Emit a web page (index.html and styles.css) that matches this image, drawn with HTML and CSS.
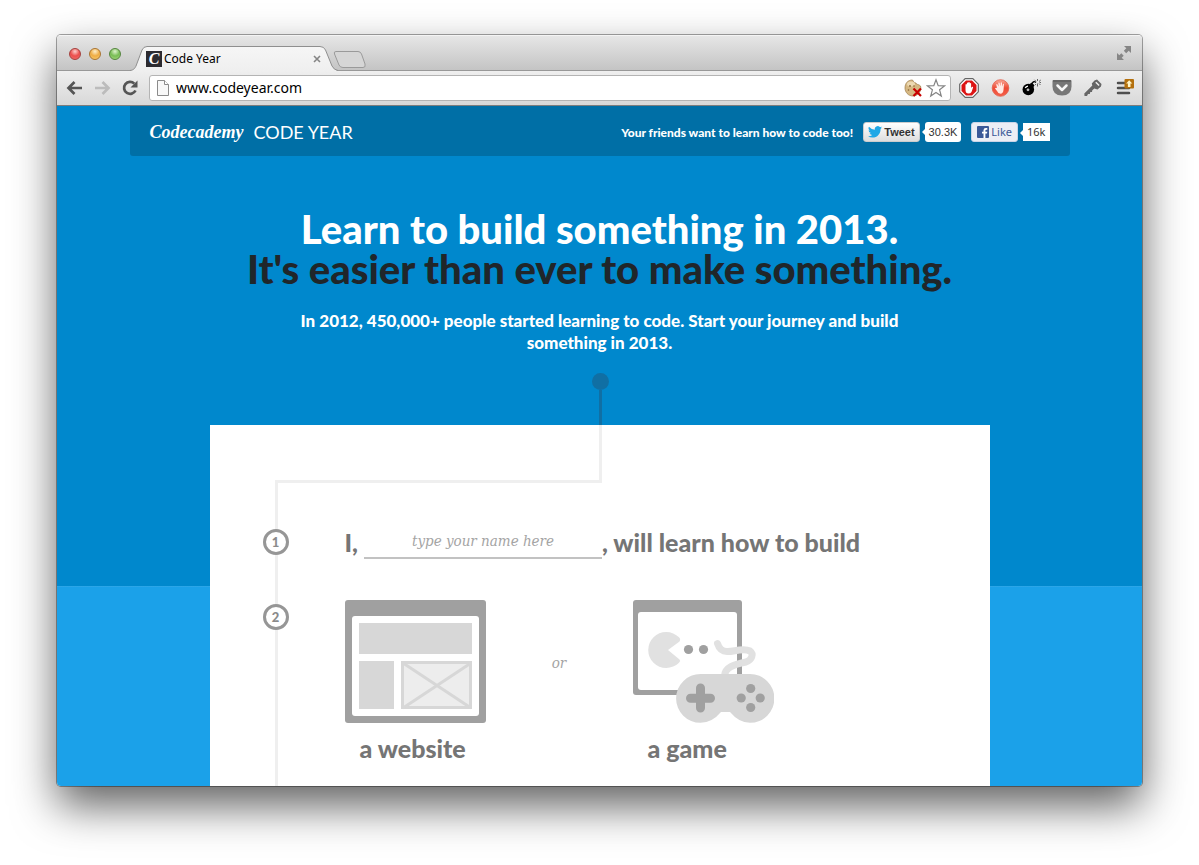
FILE: index.html
```html
<!DOCTYPE html>
<html lang="en">
<head>
<meta charset="utf-8">
<title>Code Year</title>
<link rel="stylesheet" href="styles.css">
</head>
<body>
<div class="window">
  <div class="titlebar">
    <div class="lights">
      <button class="light light-red" aria-label="Close window"></button>
      <button class="light light-amber" aria-label="Minimize window"></button>
      <button class="light light-green" aria-label="Zoom window"></button>
    </div>
    <div class="tab">
      <svg class="tab-shape" viewBox="0 0 208 25" aria-hidden="true">
        <defs><linearGradient id="tabfill" x1="0" y1="0" x2="0" y2="1"><stop offset="0" stop-color="#f6f6f6"/><stop offset="1" stop-color="#efefef"/></linearGradient></defs>
        <path d="M0 25C4 24 5 22 6 20L12 4Q13.500 .5 17 .5H190Q194 .5 195.500 4L202 20Q204 24 208 25Z" fill="url(#tabfill)"/>
        <path d="M0 24.500C4 24 5 22 6 20L12 4Q13.500 .5 17 .5H190Q194 .5 195.500 4L202 20Q204 24 208 24.500" fill="none" stroke="#8f8f8f"/>
      </svg>
      <span class="favicon">C</span>
      <span class="tab-title">Code Year</span>
      <button class="tab-close" aria-label="Close tab"><svg width="8" height="8" viewBox="0 0 8 8"><path d="M1 1l6 6M7 1L1 7" stroke="#858585" stroke-width="1.600"/></svg></button>
    </div>
    <button class="new-tab" aria-label="New tab"><svg width="34" height="17" viewBox="0 0 34 17"><path d="M3 .5H25Q27.500 .5 28.500 3L32 13Q33 16.500 30 16.500H10Q7 16.500 6 14L1.500 3Q.5 .5 3 .5Z" fill="#d6d6d6" stroke="#9a9a9a"/></svg></button>
    <button class="expand" aria-label="Full screen"><svg width="16" height="16" viewBox="0 0 16 16"><path d="M8 1h7v7l-2.300-2.300-2.500 2.500-2.400-2.400 2.500-2.500zM1 8v7h7l-2.300-2.300 2-2-2.400-2.400-2 2z" fill="#868686"/></svg></button>
  </div>

  <div class="toolbar">
    <button class="tool" aria-label="Back"><svg viewBox="0 0 20 20"><path d="M17 10H4M9.500 4L3.500 10l6 6" fill="none" stroke="#555" stroke-width="2.700"/></svg></button>
    <button class="tool" aria-label="Forward"><svg viewBox="0 0 20 20"><path d="M2 10h13M9.500 4l6 6-6 6" fill="none" stroke="#bcbcbc" stroke-width="2.700"/></svg></button>
    <button class="tool" aria-label="Reload"><svg viewBox="0 0 20 20"><path d="M14.500 12.500A6 6 0 1 1 13.300 5.600" fill="none" stroke="#555" stroke-width="2.700"/><path d="M16.500 2.500V9.500H9.500Z" fill="#555"/></svg></button>
    <div class="omnibox">
      <svg class="page-icon" width="12" height="16" viewBox="0 0 12 16"><path d="M.5 .5H7.500L11.500 4.500V15.500H.5Z" fill="#f8f8f8" stroke="#8b8b8b"/><path d="M7.500 .5V4.500H11.500" fill="#fff" stroke="#8b8b8b"/></svg>
      <input class="url" type="text" aria-label="Address" value="www.codeyear.com">
      <svg width="20" height="20" viewBox="0 0 20 20"><path d="M8.500 2C10 4 10 5 12 5 12 7 15 6 16.500 8 18 13 14 18 9 18 4 18 1 14 1 10 1 5 4 2 8.500 2Z" fill="#d6b883" stroke="#9c7b49" stroke-width=".7"/><ellipse cx="7" cy="6" rx="4" ry="2.500" fill="#ecd9b2"/><circle cx="6" cy="8" r=".9" fill="#866334"/><circle cx="4.500" cy="12" r=".8" fill="#866334"/><circle cx="10" cy="8" r=".8" fill="#866334"/><path d="M9.500 10.500l7.500 7.500M17 10.500l-7.500 7.500" stroke="#c80000" stroke-width="2.200"/></svg>
      <svg width="20" height="20" viewBox="0 0 20 20"><path d="M10 1.800L12.200 7.600 18.500 7.900 13.600 11.800 15.300 18 10 14.500 4.700 18 6.400 11.800 1.500 7.900 7.800 7.600Z" fill="#fff" stroke="#858585" stroke-width="1.200"/></svg>
    </div>
    <div class="extensions">
      <button class="tool" aria-label="AdBlock"><svg viewBox="0 0 20 20"><path d="M6.200 .7H13.800L19.300 6.200V13.800L13.800 19.300H6.200L.7 13.800V6.200Z" fill="#fff" stroke="#666" stroke-width="1.200"/><path d="M7 2.500H13L17.500 7V13L13 17.500H7L2.500 13V7Z" fill="#dc1414"/><path d="M6.500 10V6.500Q7.200 5.700 7.900 6.500V5Q8.600 4.200 9.300 5V4.300Q10 3.500 10.700 4.300V5.200Q11.500 4.500 12.100 5.400V10L13 8.700Q14.500 8.500 14 9.800L12.500 14Q11.500 15.500 9.500 15.500 6.500 15.500 6.500 12Z" fill="#fff"/></svg></button>
      <button class="tool" aria-label="Stop ads"><svg viewBox="0 0 20 20"><defs><linearGradient id="redball" x1="0" y1="0" x2="0" y2="1"><stop offset="0" stop-color="#f9aa98"/><stop offset=".5" stop-color="#ed4a35"/><stop offset="1" stop-color="#f4614a"/></linearGradient></defs><circle cx="10.500" cy="10" r="8.300" fill="url(#redball)" stroke="#e35c49" stroke-width=".8"/><path d="M7 10L6.200 6.500Q6.600 5.600 7.400 6.200L8.600 8.600 8.300 4.800Q9 4 9.600 4.800L10.400 8.300 10.700 4.500Q11.400 3.900 12 4.700L12 8.600 13 5.800Q13.900 5.400 14 6.300L13.500 12Q13 15.800 10.500 15.800 8 15.500 7 13L5 10.500Q5.500 9.300 7 10Z" fill="#ffe9e4"/></svg></button>
      <button class="tool" aria-label="Bomb"><svg viewBox="0 0 20 20"><circle cx="7.300" cy="11.500" r="5.800" fill="#000"/><path d="M8.500 6L11 4.500 13.500 7.500 12 9.500Z" fill="#000"/><path d="M11 5.500Q12.500 2.500 15 4.500" fill="none" stroke="#000" stroke-width="1.300"/><path d="M16.500 1v2M16.500 5.500v3M13.500 1.800l1.500 1.500M18 5.500l1.500 1.500M18 3.500l1.800-1.500M14 7l1-1M18.500 4.500h1.500" stroke="#555" stroke-width=".9"/><path d="M4.300 10Q5 8.200 7 8.100" fill="none" stroke="#fff" stroke-width="1.400"/><circle cx="7" cy="11.800" r="1.400" fill="#bbb"/></svg></button>
      <button class="tool" aria-label="Pocket"><svg viewBox="0 0 20 20"><path d="M1.500 2H18.500Q19.500 2 19.500 3V8.500Q19.500 17.500 10 17.500T.5 8.500V3Q.5 2 1.500 2Z" fill="#777"/><path d="M1 3H19" stroke="#555"/><path d="M5.500 7.500l4.500 4.500 4.500-4.500" fill="none" stroke="#f6f6f6" stroke-width="2.500" stroke-linecap="round" stroke-linejoin="round"/></svg></button>
      <button class="tool" aria-label="Passwords"><svg viewBox="0 0 20 20"><path d="M11.500 2.500L14 1.500 18.500 6 18 8.500 14.500 11.500 11.300 10.500 9.300 12.300 9 14 7.300 14 6.800 16 5 16 4 18 1.500 18 1.300 15.500 9.300 7.500 8.800 5.500Z" fill="#666"/><path d="M12.800 4.200l3.300 3.300" stroke="#eee" stroke-width="1.500"/></svg></button>
      <button class="tool" aria-label="Menu"><svg viewBox="0 0 20 20"><path d="M4 5H14M4 10H15M4 15H15" stroke="#4e4e4e" stroke-width="2.500" stroke-linecap="round"/><rect x="10.500" y="1" width="9.500" height="9.500" rx="1" fill="#b4700d"/><path d="M15.200 2.300L18.300 5.600H16.500V9H13.900V5.600H12.100Z" fill="#fff3c4"/></svg></button>
    </div>
  </div>

  <div class="page">
    <header class="site-header">
      <a class="brand" href="#">Codecademy</a>
      <span class="campaign">CODE YEAR</span>
      <p class="share-text">Your friends want to learn how to code too!</p>
      <div class="share">
        <button class="share-button tweet"><svg width="14" height="12" viewBox="0 0 24 20"><path d="M24 2.400a9.800 9.800 0 0 1-2.800.8A4.900 4.900 0 0 0 23.300.4a9.800 9.800 0 0 1-3.100 1.200 4.900 4.900 0 0 0-8.400 4.500A14 14 0 0 1 1.700.9a4.900 4.900 0 0 0 1.500 6.600A4.900 4.900 0 0 1 1 6.900a4.900 4.900 0 0 0 3.900 4.900 4.900 4.900 0 0 1-2.200.1 4.900 4.900 0 0 0 4.600 3.400A9.900 9.900 0 0 1 0 17.400 13.900 13.900 0 0 0 7.500 19.600c9.100 0 14.300-7.700 14-14.600A10 10 0 0 0 24 2.400z" fill="#20a8e6"/></svg>Tweet</button>
        <span class="count tweet-count">30.3K</span>
      </div>
      <div class="share">
        <button class="share-button like"><svg width="12" height="12" viewBox="0 0 12 12"><rect width="12" height="12" rx="1" fill="#3b5998"/><path d="M6.500 12V7.500H5V5.700H6.500V4.300Q6.500 2 8.800 2H10.300V3.800H9.300Q8.400 3.800 8.400 4.600V5.700H10.300L10 7.500H8.400V12Z" fill="#fff"/></svg>Like</button>
        <span class="count like-count">16k</span>
      </div>
    </header>

    <section class="hero">
      <h1 class="hero-title">Learn to build something in 2013.<br><span class="hero-dark">It's easier than ever to make something.</span></h1>
      <p class="hero-lead">In 2012, 450,000+ people started learning to code. Start your journey and build something in 2013.</p>
      <div class="start-dot"></div>
      <div class="start-line"></div>
    </section>

    <main class="card">
      <div class="connector"></div>
      <ol class="steps">
        <li class="step step-name">
          <span class="badge">1</span>
          <div class="sentence">
            <label for="name">I,</label>
            <input class="name" id="name" type="text" placeholder="type your name here">
            <span>, will learn how to build</span>
          </div>
        </li>
        <li class="step">
          <span class="badge badge-offset">2</span>
          <div class="choices">
            <button class="choice">
              <svg width="141" height="123" viewBox="0 0 141 123"><rect width="141" height="123" rx="3" fill="#a0a0a0"/><rect x="7" y="16" width="127" height="100" rx="3" fill="#fff"/><path d="M14 23H127V54H14ZM14 61H49V109H14Z" fill="#d7d7d7"/><rect x="57.500" y="62.500" width="68" height="45" fill="#ededed" stroke="#d7d7d7" stroke-width="3"/><path d="M58 63L126 108M126 63L58 108" stroke="#d7d7d7" stroke-width="3"/></svg>
              <span class="choice-label">a website</span>
            </button>
            <span class="or">or</span>
            <button class="choice">
              <svg width="141" height="123" viewBox="0 0 141 123"><rect width="109" height="95" rx="3" fill="#a0a0a0"/><rect x="5" y="12" width="99" height="78" rx="3" fill="#fff"/><path d="M46 37.300A18 18 0 1 0 46 62.700Q48 61 46.500 59.500L35 50 46.500 41.500Q48 39 46 37.300Z" fill="#e1e1e1"/><circle cx="55.500" cy="49.500" r="4.600" fill="#a0a0a0"/><circle cx="70.500" cy="49.500" r="4.600" fill="#a0a0a0"/><path d="M84.500 43.500Q87 51.500 94 51.500C100 52 110 47.500 117 51 121 54 119 60 113 62 101 64.500 92 67 91.500 76" fill="none" stroke="#e1e1e1" stroke-width="7" stroke-linecap="round"/><path d="M67.500 74H117A24.300 24.300 0 0 1 117 122.800Q106 122.800 97 112H88Q79 122.800 67.500 122.800A24.300 24.300 0 0 1 67.500 74Z" fill="#d7d7d7"/><path d="M67.500 88V108M57.500 98.300H77.500" stroke="#a0a0a0" stroke-width="9" stroke-linecap="round"/><g fill="#a0a0a0"><circle cx="117.700" cy="88.500" r="4.600"/><circle cx="117.700" cy="107.500" r="4.600"/><circle cx="108.200" cy="98" r="4.600"/><circle cx="127.200" cy="98" r="4.600"/></g></svg>
              <span class="choice-label">a game</span>
            </button>
          </div>
        </li>
      </ol>
    </main>
  </div>
</div>
</body>
</html>
```
FILE: styles.css
```css
* { box-sizing: border-box; }

body {
  margin: 0;
  padding: 35px 57px 79px;
  min-height: 100vh;
  display: flex;
  background: #fff;
  font-family: Lato, "Open Sans", sans-serif;
}

button {
  margin: 0;
  padding: 0;
  border: 0;
  background: none;
  font: inherit;
  color: inherit;
}

svg { display: block; }

/* Browser window */
.window {
  flex: 1;
  min-width: 0;
  display: flex;
  flex-direction: column;
  overflow: hidden;
  border-radius: 4px;
  box-shadow: 0 0 0 1px rgba(0, 0, 0, .35), 0 20px 44px rgba(0, 0, 0, .62);
}

.titlebar {
  height: 36px;
  padding: 0 10px 0 12px;
  display: flex;
  align-items: center;
  border-bottom: 1px solid #989898;
  border-top: 1px solid #f4f4f4;
  background: linear-gradient(#e6e6e6, #c4c4c4);
}

.lights { display: flex; gap: 8px; padding-top: 2px; }

.light {
  width: 12px;
  height: 12px;
  border: 1px solid;
  border-radius: 50%;
}

.light-red { border-color: #a5403d; background: radial-gradient(circle at 50% 25%, #fbd0cc, #ec4e4c 50%, #f0716c); }
.light-amber { border-color: #aa7430; background: radial-gradient(circle at 50% 25%, #fdeec9, #efac42 50%, #f9d176); }
.light-green { border-color: #54853d; background: radial-gradient(circle at 50% 25%, #def3cd, #78bd54 50%, #a9dc82); }

.tab {
  position: relative;
  align-self: flex-end;
  width: 208px;
  height: 25px;
  margin: 0 0 -1px 9px;
  padding: 0 17px 0 16px;
  display: flex;
  align-items: center;
  gap: 2px;
}

.tab-shape {
  position: absolute;
  inset: 0;
  width: 208px;
  height: 25px;
}

.favicon,
.tab-title,
.tab-close { position: relative; }

.favicon {
  width: 16px;
  height: 16px;
  background: #2c2b30;
  color: #fff;
  font: italic bold 16px/16px "Liberation Serif", serif;
  text-align: center;
}

.tab-title {
  flex: 1;
  font: 12px/16px "Noto Sans", sans-serif;
}

.new-tab { margin: 0 auto 0 -5px; padding-top: 12px; }
.expand { align-self: center; }

.toolbar {
  height: 35px;
  padding: 0 8px;
  display: flex;
  align-items: center;
  gap: 8px;
  border-bottom: 1px solid #7d7d7d;
  background: linear-gradient(#efefef, #d8d8d8);
}

.tool svg { width: 20px; height: 20px; }

.omnibox {
  flex: 1;
  height: 26px;
  padding: 0 4px 0 7px;
  display: flex;
  align-items: center;
  gap: 2px;
  border: 1px solid #b4b4b4;
  border-radius: 3px;
  background: #fff;
}

.url {
  flex: 1;
  min-width: 0;
  padding: 0 5px;
  border: 0;
  background: none;
  color: #000;
  font: 14px/20px "Noto Sans", sans-serif;
}

.extensions { display: flex; gap: 11px; }

/* Web page */
.page {
  flex: 1;
  display: flex;
  flex-direction: column;
  align-items: center;
  background: linear-gradient(#0088cd 480px, #3aaae8 480px, #1ba1e9 481px);
}

.site-header {
  width: 100%;
  max-width: 940px;
  height: 50px;
  padding: 2px 20px 0;
  display: flex;
  align-items: center;
  gap: 10px;
  border-radius: 0 0 3px 3px;
  background: #006fa6;
  color: #fff;
}

.brand {
  color: #fff;
  font: italic bold 18px/24px "Liberation Serif", serif;
  text-decoration: none;
}

.campaign { font-size: 18px; line-height: 24px; }

.share-text {
  margin: 0 0 0 auto;
  font-size: 12px;
  font-weight: 900;
}

.share { display: flex; align-items: center; gap: 5px; }

.share-button {
  height: 20px;
  padding: 0 4px;
  display: flex;
  align-items: center;
  gap: 2px;
  border: 1px solid #ccc;
  border-radius: 3px;
}

.tweet {
  background: linear-gradient(#fff, #dedede);
  color: #333;
  font: bold 11px/18px "Liberation Sans", sans-serif;
}

.like {
  padding: 0 5px;
  border-color: #cad4e7;
  background: #eceef5;
  color: #3b5998;
  font: 11px/18px "Noto Sans", sans-serif;
}

.count {
  position: relative;
  padding: 0 4px;
  background: #fff;
  color: #333;
}

.count::before {
  content: "";
  position: absolute;
  top: 7px;
  left: -3px;
  border: solid transparent;
  border-width: 3px 3px 3px 0;
  border-right-color: #fff;
}

.tweet-count { border-radius: 3px; font: 11px/20px "Liberation Sans", sans-serif; }
.like-count { font: 11px/18px "Noto Sans", sans-serif; }

.hero {
  padding-top: 53px;
  display: flex;
  flex-direction: column;
  align-items: center;
  color: #fff;
  text-align: center;
}

.hero-title {
  margin: 0;
  font-size: 40px;
  font-weight: 900;
  line-height: 40px;
}

.hero-dark { color: #20262a; }

.hero-lead {
  max-width: 620px;
  margin: 21px 0 0;
  font-size: 17px;
  font-weight: 900;
  line-height: 22px;
}

.start-dot,
.start-line {
  margin-left: 2px;
  background: #106fa4;
}

.start-dot {
  width: 17px;
  height: 17px;
  margin-top: 19px;
  border-radius: 50%;
}

.start-line {
  width: 3px;
  height: 35px;
}

.card {
  flex: 1;
  width: 100%;
  max-width: 780px;
  padding-left: 65px;
  display: flex;
  flex-direction: column;
  background: #fff;
  color: #757575;
}

.connector {
  width: 327px;
  height: 58px;
  border: solid #efefef;
  border-width: 0 3px 3px 0;
}

.steps {
  flex: 1;
  margin: 0;
  padding: 42px 0 20px;
  border-left: 3px solid #efefef;
  list-style: none;
}

.step {
  display: flex;
  gap: 56px;
  margin-left: -15px;
}

.step-name { margin-bottom: 41px; align-items: center; }

.badge {
  width: 26px;
  height: 26px;
  border: 3px solid #969696;
  border-radius: 50%;
  background: #fff;
  color: #8b8b8b;
  font-size: 13px;
  font-weight: 900;
  line-height: 20px;
  text-align: center;
}

.badge-offset { margin-top: 4px; }

.sentence {
  display: flex;
  align-items: center;
  font-size: 25px;
  font-weight: 900;
  line-height: 34px;
}

.name {
  width: 238px;
  height: 34px;
  margin-left: 6px;
  padding: 0;
  border: 0;
  border-bottom: 2px solid #c2c2c2;
  background: none;
  text-align: center;
}

.name,
.or {
  color: #a4a4a4;
  font-family: "DejaVu Serif Condensed", "DejaVu Serif", serif;
  font-size: 15px;
  font-style: italic;
  font-weight: 400;
}

.name::placeholder { color: #a4a4a4; }

.choices { display: flex; }
.choice { text-align: left; }

.choice-label {
  display: block;
  padding: 10px 0 0 15px;
  font-size: 25px;
  font-weight: 900;
  line-height: 30px;
}

.or {
  width: 147px;
  padding-top: 53px;
  line-height: 20px;
  text-align: center;
}
```
